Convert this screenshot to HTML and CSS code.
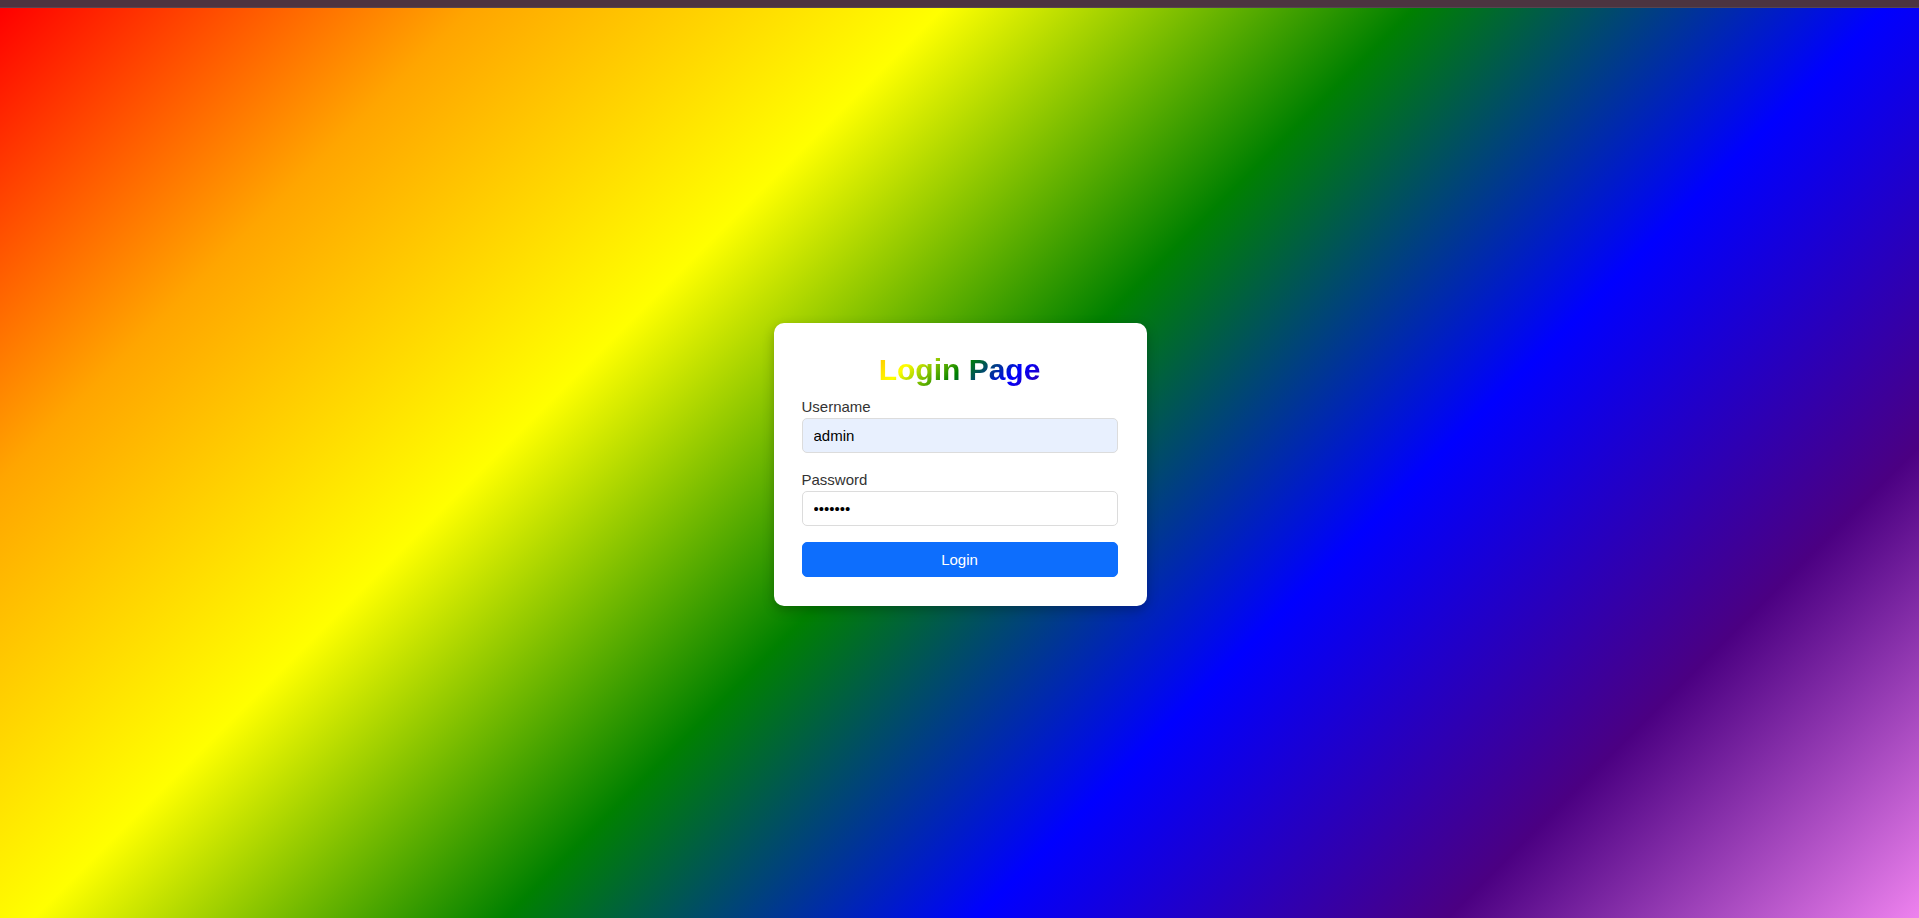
FILE: index.html
```html
<!DOCTYPE html>
<html lang="en">
<head>
<meta charset="UTF-8">
<title>Login Page</title>
<link rel="stylesheet" href="styles.css">
</head>
<body>
<div class="topbar"></div>
<main class="stage">
  <div class="card">
    <h2 class="title">Login Page</h2>
    <form class="form">
      <div class="group">
        <label class="label" for="username">Username</label>
        <input class="field field-filled" id="username" type="text" value="admin">
      </div>
      <div class="group group-last">
        <label class="label" for="password">Password</label>
        <input class="field" id="password" type="password" value="1234567">
      </div>
      <button class="btn" type="button">Login</button>
    </form>
  </div>
</main>
</body>
</html>
```
FILE: styles.css
```css
* { box-sizing: border-box; }
html, body {
  margin: 0;
  height: 100%;
}
body {
  font-family: "Liberation Sans", Arial, sans-serif;
  display: flex;
  flex-direction: column;
  background: #4c3440;
}
.topbar {
  height: 7px;
  background: #4c3440;
  border-bottom: 1px solid #574550;
  flex: 0 0 8px;
}
.stage {
  flex: 1;
  display: flex;
  align-items: center;
  justify-content: center;
  padding-left: 1px;
  padding-top: 2px;
  background: linear-gradient(135deg, red, orange, yellow, green, blue, indigo, violet);
}
.card {
  width: 373px;
  background: #fff;
  border-radius: 10px;
  padding: 30px 29px 29px 28px;
  box-shadow: 0 4px 12px rgba(0, 0, 0, 0.25);
}
.title {
  margin: 0 0 11px;
  font-size: 30px;
  font-weight: bold;
  text-align: center;
  background: linear-gradient(135deg, red, orange, yellow, green, blue, indigo, violet);
  -webkit-background-clip: text;
  background-clip: text;
  color: transparent;
}
.form { margin: 0; }
.group {
  margin-bottom: 18px;
}
.group-last {
  margin-bottom: 16px;
}
.label {
  display: block;
  font-size: 15px;
  color: #333;
  margin-bottom: 3px;
}
.field {
  display: block;
  width: 100%;
  font-family: "Liberation Sans", Arial, sans-serif;
  font-size: 15px;
  color: #000;
  padding: 8px 11px;
  border: 1px solid #dcdcdc;
  border-radius: 5px;
  background: #fff;
  outline: none;
}
.field-filled {
  background: #e8f0fe;
}
.btn {
  display: block;
  width: 100%;
  font-family: "Liberation Sans", Arial, sans-serif;
  font-size: 15px;
  color: #fff;
  background: #0d6efd;
  border: 1px solid #0d6efd;
  border-radius: 5px;
  padding: 8px;
  cursor: pointer;
}
```
